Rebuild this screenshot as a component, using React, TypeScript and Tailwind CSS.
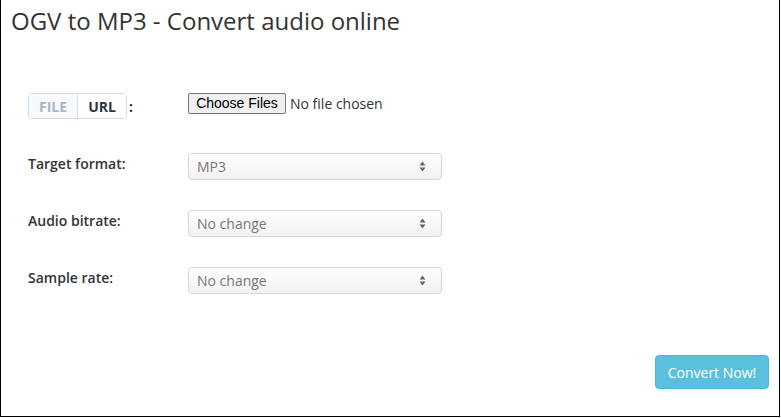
import { useState } from 'react';

const SELECTS = [
  { label: 'Target format:', value: 'MP3' },
  { label: 'Audio bitrate:', value: 'No change' },
  { label: 'Sample rate:', value: 'No change' },
];

function SortArrows() {
  return (
    <svg width="7" height="11" viewBox="0 0 7 11" className="shrink-0">
      <path d="M3.5 0.5 L6.5 4.5 H0.5 Z" fill="#666" />
      <path d="M3.5 10.5 L6.5 6.5 H0.5 Z" fill="#666" />
    </svg>
  );
}

function FakeSelect({ value }: { value: string }) {
  return (
    <div className="flex h-[27px] w-[254px] items-center justify-between rounded-[4px] border border-[#cdd8e3] bg-gradient-to-b from-white to-[#f1f1f1] pl-[8px] pr-[15px] text-[14px] text-[#777]">
      <span>{value}</span>
      <SortArrows />
    </div>
  );
}

export default function App() {
  const [mode, setMode] = useState<'file' | 'url'>('url');

  const tab = (active: boolean) =>
    active
      ? 'w-[48px] bg-white text-[14px] font-bold text-[#2f3640]'
      : 'w-[48px] bg-[#f7f9fb] text-[14px] font-bold text-[#a9b5c3]';

  return (
    <div className="h-[418px] w-[781px] bg-white font-['Open_Sans',sans-serif]">
      <div className="flex h-[417px] w-[780px] flex-col border-x border-b border-black pl-[10px] pr-[10px]">
        <h1 className="mt-[8px] text-[24px] leading-[26px] text-[#333]">OGV to MP3 - Convert audio online</h1>

        <div className="mt-[59px] flex flex-col pl-[17px]">
          {/* source picker */}
          <div className="flex h-[26px] items-start">
            <div className="flex w-[160px] items-center">
              <div className="flex h-[26px] overflow-hidden rounded-[4px] border border-[#d3dde7]">
                <button onClick={() => setMode('file')} className={tab(mode === 'file')}>
                  FILE
                </button>
                <div className="w-px bg-[#d3dde7]" />
                <button onClick={() => setMode('url')} className={tab(mode === 'url')}>
                  URL
                </button>
              </div>
              <span className="ml-[2px] text-[14px] font-bold text-[#333]">:</span>
            </div>
            <div className="flex items-center">
              <button className="h-[21px] w-[98px] rounded-[2px] border border-[#767676] bg-[#efefef] font-['Liberation_Sans',sans-serif] text-[14px] leading-[19px] text-black">
                Choose Files
              </button>
              <span className="ml-[4px] text-[14px] text-[#333]">No file chosen</span>
            </div>
          </div>

          <div className="mt-[34px] flex flex-col gap-[30px]">
            {SELECTS.map(s => (
              <div key={s.label} className="flex items-start">
                <label className="w-[160px] pt-[1px] text-[14px] font-semibold leading-[20px] text-[#333]">{s.label}</label>
                <FakeSelect value={s.value} />
              </div>
            ))}
          </div>
        </div>

        <div className="mt-auto mb-[27px] flex justify-end">
          <button className="h-[34px] w-[114px] rounded-[4px] border border-[#46b8da] bg-[#5bc0de] text-[14px] text-white">
            Convert Now!
          </button>
        </div>
      </div>
    </div>
  );
}
